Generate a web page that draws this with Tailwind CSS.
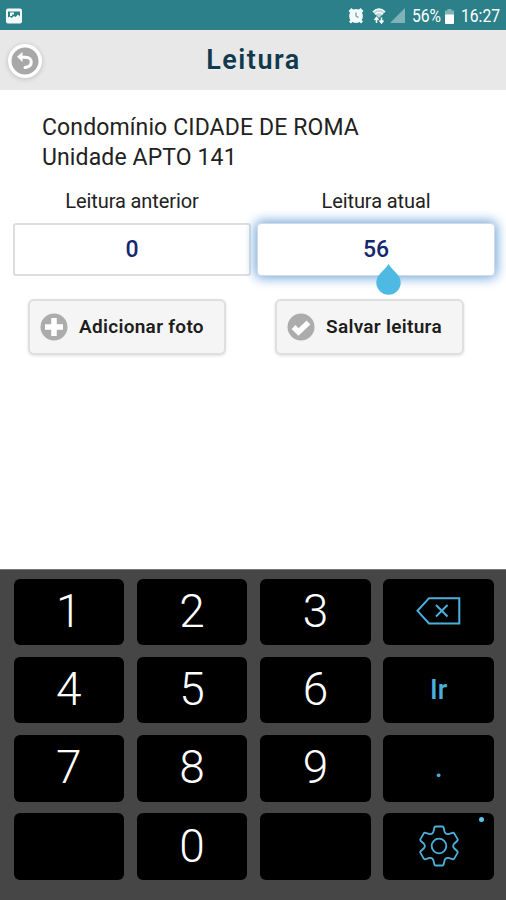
<!DOCTYPE html>
<html lang="pt-BR">
<head>
    <meta charset="UTF-8">
    <meta name="viewport" content="width=device-width, initial-scale=1.0">
    <title>Leitura</title>
    <script src="https://cdn.jsdelivr.net/npm/@tailwindcss/browser@4"></script>
</head>
<body class="w-[506px] h-[900px] flex flex-col overflow-hidden bg-white font-[Roboto,sans-serif]">
    <!-- Status bar -->
    <div class="h-[30px] shrink-0 bg-[#2c8089] flex items-center justify-between pl-[6px] pr-[6px] pt-[2px] text-white">
        <svg class="w-4 h-4" viewBox="0 0 16 16">
            <rect x="0" y="0.5" width="16" height="15" rx="2" fill="#f4fafa"/>
            <path d="M2 9.500V3.500h12v5l-2-2-2.500 2.500-1.500-1-2.500 2-1.500-1.500z" fill="#2c8089"/>
            <path d="M4 4.500h4v2h-2v1.500h-2z" fill="#f4fafa"/>
        </svg>
        <div class="flex items-center">
            <svg class="w-4 h-4 mr-[8px]" viewBox="0 0 16 16">
                <circle cx="8" cy="8" r="6.900" fill="#f4fafa"/>
                <path d="M1.500 4l3-3M14.500 4l-3-3M2 14.500l2-2M14 14.500l-2-2" stroke="#f4fafa" stroke-width="2.800"/>
                <path d="M8 4.500V8l2.500 1.500" stroke="#5d9ea5" stroke-width="1.200" fill="none"/>
            </svg>
            <svg class="w-[14px] h-4 mr-[4px]" viewBox="0 0 14 16">
                <path d="M1 4Q7-1.500 13 4L7 10z" fill="#b9d6d9"/>
                <path d="M0.800 4Q7-2 13.200 4M3 6.200Q7 2.500 11 6.200" stroke="#fff" stroke-width="1.300" fill="none"/>
                <path d="M4.500 15V10M2.500 12l2-2.500 2 2.500M9.500 9.500v5M7.500 12.500l2 2.500 2-2.500" stroke="#f4fafa" stroke-width="1.500" fill="none"/>
            </svg>
            <svg class="w-[16px] h-4 mr-[6px]" viewBox="0 0 16 16"><path d="M0 15L15 0v15z" fill="#80b3b8"/></svg>
            <span class="w-[29px] text-[18px] leading-none whitespace-nowrap"><span class="inline-block origin-left scale-x-[.87]">56%</span></span>
            <svg class="w-[9px] h-[15px] ml-[4px] mr-[7px]" viewBox="0 0 9 15">
                <path d="M2.500 0h4v1.500H9V6H0V1.500h2.500z" fill="#80b3b8"/>
                <path d="M0 5.500h9V14q0 1-1 1H1q-1 0-1-1z" fill="#fff"/>
            </svg>
            <span class="w-[39px] text-[18px] leading-none whitespace-nowrap"><span class="inline-block origin-left scale-x-[.87]">16:27</span></span>
        </div>
    </div>

    <!-- Page header -->
    <header class="relative h-[60px] shrink-0 bg-[#e8e8e8] flex items-center justify-center">
        <button class="absolute left-[8px] top-[14px] w-[34px] h-[34px] rounded-full bg-white shadow-[0_1px_4px_1px_rgba(0,0,0,.13)] flex items-center justify-center">
            <svg class="w-7 h-7" viewBox="0 0 28 28">
                <circle cx="14" cy="14" r="13.500" fill="#a8a8a8"/>
                <path d="M9 10.200H14.500C22 10.200 22.500 19.500 14 20.500" stroke="#fff" stroke-width="3" stroke-linecap="round" fill="none"/>
                <path d="M6 9.800L11.500 5v10z" fill="#fff"/>
            </svg>
        </button>
        <h1 class="pl-[1px] text-[27px] leading-none font-semibold tracking-[1.500px] text-[#123a4c] [text-shadow:0_1px_0_#f3f3f3]">Leitura</h1>
    </header>

    <main class="h-[479px] shrink-0 pt-[23px]">
        <p class="pl-[42px] text-[23px] leading-[30px] tracking-[.12px] text-[#222]">Condomínio CIDADE DE ROMA<br>Unidade APTO 141</p>

        <div class="flex gap-[6px] pl-[13px] pt-[13px]">
            <div class="w-[238px] flex flex-col items-center">
                <label class="text-[20px] leading-[30px] tracking-[-.1px] text-[#222]">Leitura anterior</label>
                <div class="mt-[7px] w-full h-[53px] rounded-[3px] border-2 border-[#dedede] flex items-center justify-center pt-px text-[23px] font-medium text-[#15286e]">0</div>
            </div>
            <div class="w-[238px] flex flex-col items-center">
                <label class="text-[20px] leading-[30px] tracking-[-.1px] text-[#222]">Leitura atual</label>
                <div class="relative mt-[7px] w-full h-[53px] rounded-[4px] border border-[#d3dae2] bg-white shadow-[0_0_12px_2px_#6ea6dc] flex items-center justify-center pt-px text-[23px] font-medium text-[#15286e]">
                    56
                    <!-- Text cursor handle -->
                    <svg class="absolute left-[118px] top-[40px] w-[25px] h-[31px]" viewBox="0 0 25 31">
                        <path d="M12.500 0C14.500 3.500 18 6.500 21.300 10.200A12.200 12.200 0 1 1 3.700 10.200C7 6.500 10.500 3.500 12.500 0z" fill="#4eb9e2"/>
                    </svg>
                </div>
            </div>
        </div>

        <div class="flex gap-[49px] pl-[28px] pt-[23px]">
            <button class="w-[198px] h-[56px] rounded-[6px] border-2 border-[#dfdfdf] bg-[#f5f5f5] shadow-[0_1px_3px_rgba(0,0,0,.12)] flex items-center pl-[10px] gap-[11px] text-[19px] font-semibold tracking-[.3px] text-[#1d1d1d] whitespace-nowrap">
                <svg class="w-7 h-7 shrink-0" viewBox="0 0 28 28">
                    <circle cx="14" cy="14" r="13.500" fill="#acacac"/>
                    <path d="M14 5v18M5 14h18" stroke="#fff" stroke-width="5.500"/>
                </svg>
                Adicionar foto
            </button>
            <button class="w-[189px] h-[56px] rounded-[6px] border-2 border-[#dfdfdf] bg-[#f5f5f5] shadow-[0_1px_3px_rgba(0,0,0,.12)] flex items-center pl-[10px] gap-[11px] text-[19px] font-semibold tracking-[.3px] text-[#1d1d1d] whitespace-nowrap">
                <svg class="w-7 h-7 shrink-0" viewBox="0 0 28 28">
                    <circle cx="14" cy="14" r="13.500" fill="#acacac"/>
                    <path d="M6.500 14l5 5L21.500 9.500" stroke="#fff" stroke-width="5.400" fill="none"/>
                </svg>
                Salvar leitura
            </button>
        </div>
    </main>

    <!-- Numeric keyboard -->
    <div class="h-[331px] shrink-0 bg-[#464646] border-t border-[#777] pt-[8.500px] pl-[13.500px] pr-[12px] grid grid-cols-4 auto-rows-[66.700px] content-start gap-x-[12.700px] gap-y-[11.600px] text-[46px] leading-none font-light text-white">
        <div class="rounded-[6px] bg-black flex items-center justify-center pb-0.5">1</div>
        <div class="rounded-[6px] bg-black flex items-center justify-center pb-0.5">2</div>
        <div class="rounded-[6px] bg-black flex items-center justify-center pb-0.5">3</div>
        <div class="rounded-[6px] bg-black flex items-center justify-center pb-0.5">
            <svg class="w-[45px] h-[28px]" viewBox="0 0 45 28" fill="none" stroke="#4bb1dc" stroke-width="2">
                <path d="M13 1.200H43.300V26.500H13L1.500 13.800z"/>
                <path d="M20 8l11.500 11.500M31.500 8L20 19.500"/>
            </svg>
        </div>
        <div class="rounded-[6px] bg-black flex items-center justify-center pb-0.5">4</div>
        <div class="rounded-[6px] bg-black flex items-center justify-center pb-0.5">5</div>
        <div class="rounded-[6px] bg-black flex items-center justify-center pb-0.5">6</div>
        <div class="rounded-[6px] bg-black flex items-center justify-center text-[27px] font-medium text-[#4bb1dc]">Ir</div>
        <div class="rounded-[6px] bg-black flex items-center justify-center pb-0.5">7</div>
        <div class="rounded-[6px] bg-black flex items-center justify-center pb-0.5">8</div>
        <div class="rounded-[6px] bg-black flex items-center justify-center pb-0.5">9</div>
        <div class="rounded-[6px] bg-black flex items-center justify-center text-[27px] font-medium text-[#4bb1dc]">.</div>
        <div class="rounded-[6px] bg-black"></div>
        <div class="rounded-[6px] bg-black flex items-center justify-center pb-0.5">0</div>
        <div class="rounded-[6px] bg-black"></div>
        <div class="relative rounded-[6px] bg-black flex items-center justify-center pb-px">
            <svg class="w-[40px] h-[42px]" viewBox="-20 -21 40 42" fill="none" stroke="#4bb1dc" stroke-width="1.800" stroke-linejoin="round">
                <path id="gear"/>
                <circle r="7.300"/>
            </svg>
            <span class="absolute right-[10px] top-[3.500px] w-[5px] h-[5px] rounded-full bg-[#5cc4ee]"></span>
        </div>
    </div>

    <script>
        // Six-tooth gear outline: the same tooth turned by 60 degrees each time
        let d = '';
        for (let i = 0; i < 6; i++) {
            const a = i * Math.PI / 3;
            const pt = (x, y) => `${(x * Math.cos(a) - y * Math.sin(a)).toFixed(2)} ${(x * Math.sin(a) + y * Math.cos(a)).toFixed(2)}`;
            d += `${i ? 'L' : 'M'}${pt(-5.6, -14.2)}L${pt(-4.7, -18.2)}Q${pt(-4.4, -19.5)} ${pt(-3.3, -19.5)}`;
            d += `L${pt(3.3, -19.5)}Q${pt(4.4, -19.5)} ${pt(4.7, -18.2)}L${pt(5.6, -14.2)}Q${pt(6.6, -11.4)} ${pt(9.5, -11.95)}`;
        }
        document.getElementById('gear').setAttribute('d', d + 'Z');
    </script>
</body>
</html>
